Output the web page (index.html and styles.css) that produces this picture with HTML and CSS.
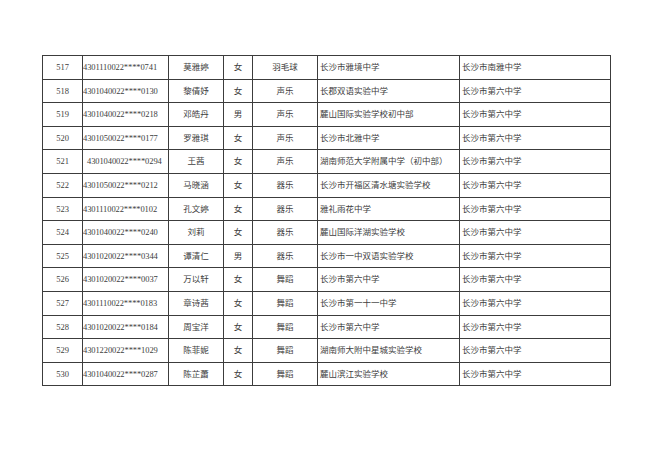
FILE: index.html
```html
<!DOCTYPE html>
<html>
<head>
<meta charset="utf-8">
<link rel="stylesheet" href="styles.css">
</head>
<body>
<div class="page">
<table class="roster">
<colgroup>
<col class="c-no"><col class="c-id"><col class="c-name"><col class="c-sex"><col class="c-sub"><col class="c-from"><col class="c-to">
</colgroup>
<tbody>
<tr><td class="ctr">517</td><td class="id">4301110022****0741</td><td class="ctr">莫雅婷</td><td class="ctr">女</td><td class="ctr">羽毛球</td><td class="lft">长沙市雅境中学</td><td class="lft">长沙市南雅中学</td></tr>
<tr><td class="ctr">518</td><td class="id">4301040022****0130</td><td class="ctr">黎倩妤</td><td class="ctr">女</td><td class="ctr">声乐</td><td class="lft">长郡双语实验中学</td><td class="lft">长沙市第六中学</td></tr>
<tr><td class="ctr">519</td><td class="id">4301040022****0218</td><td class="ctr">邓皓丹</td><td class="ctr">男</td><td class="ctr">声乐</td><td class="lft">麓山国际实验学校初中部</td><td class="lft">长沙市第六中学</td></tr>
<tr><td class="ctr">520</td><td class="id">4301050022****0177</td><td class="ctr">罗雅琪</td><td class="ctr">女</td><td class="ctr">声乐</td><td class="lft">长沙市北雅中学</td><td class="lft">长沙市第六中学</td></tr>
<tr><td class="ctr">521</td><td class="id id-ind">4301040022****0294</td><td class="ctr">王茜</td><td class="ctr">女</td><td class="ctr">声乐</td><td class="lft">湖南师范大学附属中学（初中部）</td><td class="lft">长沙市第六中学</td></tr>
<tr><td class="ctr">522</td><td class="id">4301050022****0212</td><td class="ctr">马晓涵</td><td class="ctr">女</td><td class="ctr">器乐</td><td class="lft">长沙市开福区清水塘实验学校</td><td class="lft">长沙市第六中学</td></tr>
<tr><td class="ctr">523</td><td class="id">4301110022****0102</td><td class="ctr">孔文婷</td><td class="ctr">女</td><td class="ctr">器乐</td><td class="lft">雅礼雨花中学</td><td class="lft">长沙市第六中学</td></tr>
<tr><td class="ctr">524</td><td class="id">4301040022****0240</td><td class="ctr">刘莉</td><td class="ctr">女</td><td class="ctr">器乐</td><td class="lft">麓山国际洋湖实验学校</td><td class="lft">长沙市第六中学</td></tr>
<tr><td class="ctr">525</td><td class="id">4301020022****0344</td><td class="ctr">谭清仁</td><td class="ctr">男</td><td class="ctr">器乐</td><td class="lft">长沙市一中双语实验学校</td><td class="lft">长沙市第六中学</td></tr>
<tr><td class="ctr">526</td><td class="id">4301020022****0037</td><td class="ctr">万以轩</td><td class="ctr">女</td><td class="ctr">舞蹈</td><td class="lft">长沙市第六中学</td><td class="lft">长沙市第六中学</td></tr>
<tr><td class="ctr">527</td><td class="id">4301110022****0183</td><td class="ctr">章诗茜</td><td class="ctr">女</td><td class="ctr">舞蹈</td><td class="lft">长沙市第一十一中学</td><td class="lft">长沙市第六中学</td></tr>
<tr><td class="ctr">528</td><td class="id">4301020022****0184</td><td class="ctr">周宝洋</td><td class="ctr">女</td><td class="ctr">舞蹈</td><td class="lft">长沙市第六中学</td><td class="lft">长沙市第六中学</td></tr>
<tr><td class="ctr">529</td><td class="id">4301220022****1029</td><td class="ctr">陈菲妮</td><td class="ctr">女</td><td class="ctr">舞蹈</td><td class="lft">湖南师大附中星城实验学校</td><td class="lft">长沙市第六中学</td></tr>
<tr><td class="ctr">530</td><td class="id">4301040022****0287</td><td class="ctr">陈芷蕭</td><td class="ctr">女</td><td class="ctr">舞蹈</td><td class="lft">麓山滨江实验学校</td><td class="lft">长沙市第六中学</td></tr>
</tbody>
</table>
</div>
</body>
</html>
```
FILE: styles.css
```css
html, body {
  margin: 0;
  padding: 0;
  background: #ffffff;
}
.page {
  width: 660px;
  height: 467px;
  padding: 55px 0 0 42px;
  box-sizing: border-box;
}
.roster {
  border-collapse: collapse;
  table-layout: fixed;
  width: 568px;
  font-family: "Liberation Serif", "Noto Sans CJK SC", serif;
  font-size: 8.5px;
  color: #404040;
}
.c-no { width: 40px; }
.c-id { width: 86px; }
.c-name { width: 55px; }
.c-sex { width: 29px; }
.c-sub { width: 65px; }
.c-from { width: 142px; }
.c-to { width: 151px; }
.roster td {
  border: 1.5px solid #3c3c3c;
  height: 22.6px;
  padding: 0;
  white-space: nowrap;
  overflow: hidden;
  vertical-align: middle;
  line-height: 1;
}
.ctr { text-align: center; }
.lft { text-align: left; padding-left: 2px !important; }
.id { text-align: left; padding-left: 0; letter-spacing: -0.1px; }
.id-ind { padding-left: 4px !important; }
```
